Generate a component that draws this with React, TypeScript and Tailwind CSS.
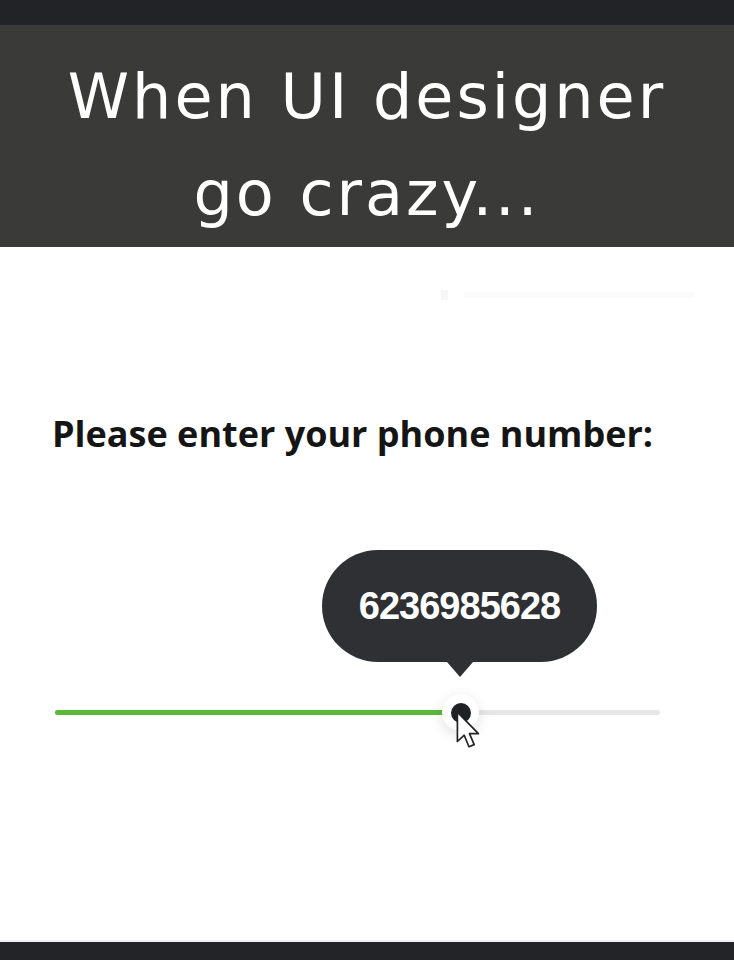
import React, { useState } from "react";

const App: React.FC = () => {
  const [value] = useState(64.5);

  return (
    <div className="w-[734px] h-[960px] flex flex-col bg-white overflow-hidden">
      <div className="h-[25px] bg-[#222327] shrink-0" />
      <div
        className="h-[222px] bg-[#3a3a38] shrink-0 flex flex-col items-center text-white pt-[40px] text-[62px] tracking-[3px]"
        style={{ fontFamily: "'URW Gothic', 'DejaVu Sans', sans-serif" }}
      >
        <div className="leading-[64px]">When UI designer</div>
        <div className="leading-[64px] mt-[33px]">go crazy...</div>
      </div>
      <div className="flex-1 flex flex-col">
        <div className="flex justify-end items-center gap-4 pr-[40px] pt-[36px] h-[60px]">
          <div className="w-[7px] h-[10px] bg-[#f6f6f6]" />
          <div className="w-[230px] h-[6px] bg-[#fbfbfb]" />
        </div>
        <div
          className="mt-[105px] pl-[52px] text-[36px] leading-[44px] font-bold text-[#151515]"
          style={{ fontFamily: "'Open Sans', sans-serif" }}
        >
          Please enter your phone number:
        </div>
        <div className="relative mt-[94px] ml-[55px] w-[605px] h-[200px]">
          <div className="absolute left-[267px] top-0 flex flex-col items-center">
            <div
              className="w-[275px] h-[112px] rounded-[56px] bg-[#2e3033] flex items-center justify-center text-white text-[38px] font-bold tracking-[-1px]"
              style={{ fontFamily: "'Liberation Sans', Arial, sans-serif" }}
            >
              6236985628
            </div>
            <div className="w-0 h-0 border-l-[13px] border-r-[13px] border-t-[15px] border-l-transparent border-r-transparent border-t-[#2e3033]" />
          </div>
          <div className="absolute left-0 right-0 top-[160px] h-[5px] rounded-full bg-[#e6e6e6]">
            <div className="h-full rounded-full bg-[#5cb83a]" style={{ width: `${value}%` }} />
          </div>
          <div className="absolute left-[387px] top-[144px] w-[37px] h-[37px] rounded-full bg-white shadow-[0_4px_14px_rgba(0,0,0,0.12)] flex items-center justify-center">
            <div className="w-[20px] h-[20px] rounded-full bg-[#1f2125]" />
          </div>
          <svg className="absolute left-[400px] top-[160px]" width="30" height="42" viewBox="0 0 28 40">
            <path
              d="M2 2 L2 30 L8.5 24 L13 35 L18 33 L13.5 22.5 L22 22.5 Z"
              fill="#fff"
              stroke="#222"
              strokeWidth="1.6"
              strokeLinejoin="round"
            />
          </svg>
        </div>
      </div>
      <div className="h-[2px] bg-[#f1f1f1] shrink-0" />
      <div className="h-[18px] bg-[#232428] shrink-0" />
    </div>
  );
};

export default App;
